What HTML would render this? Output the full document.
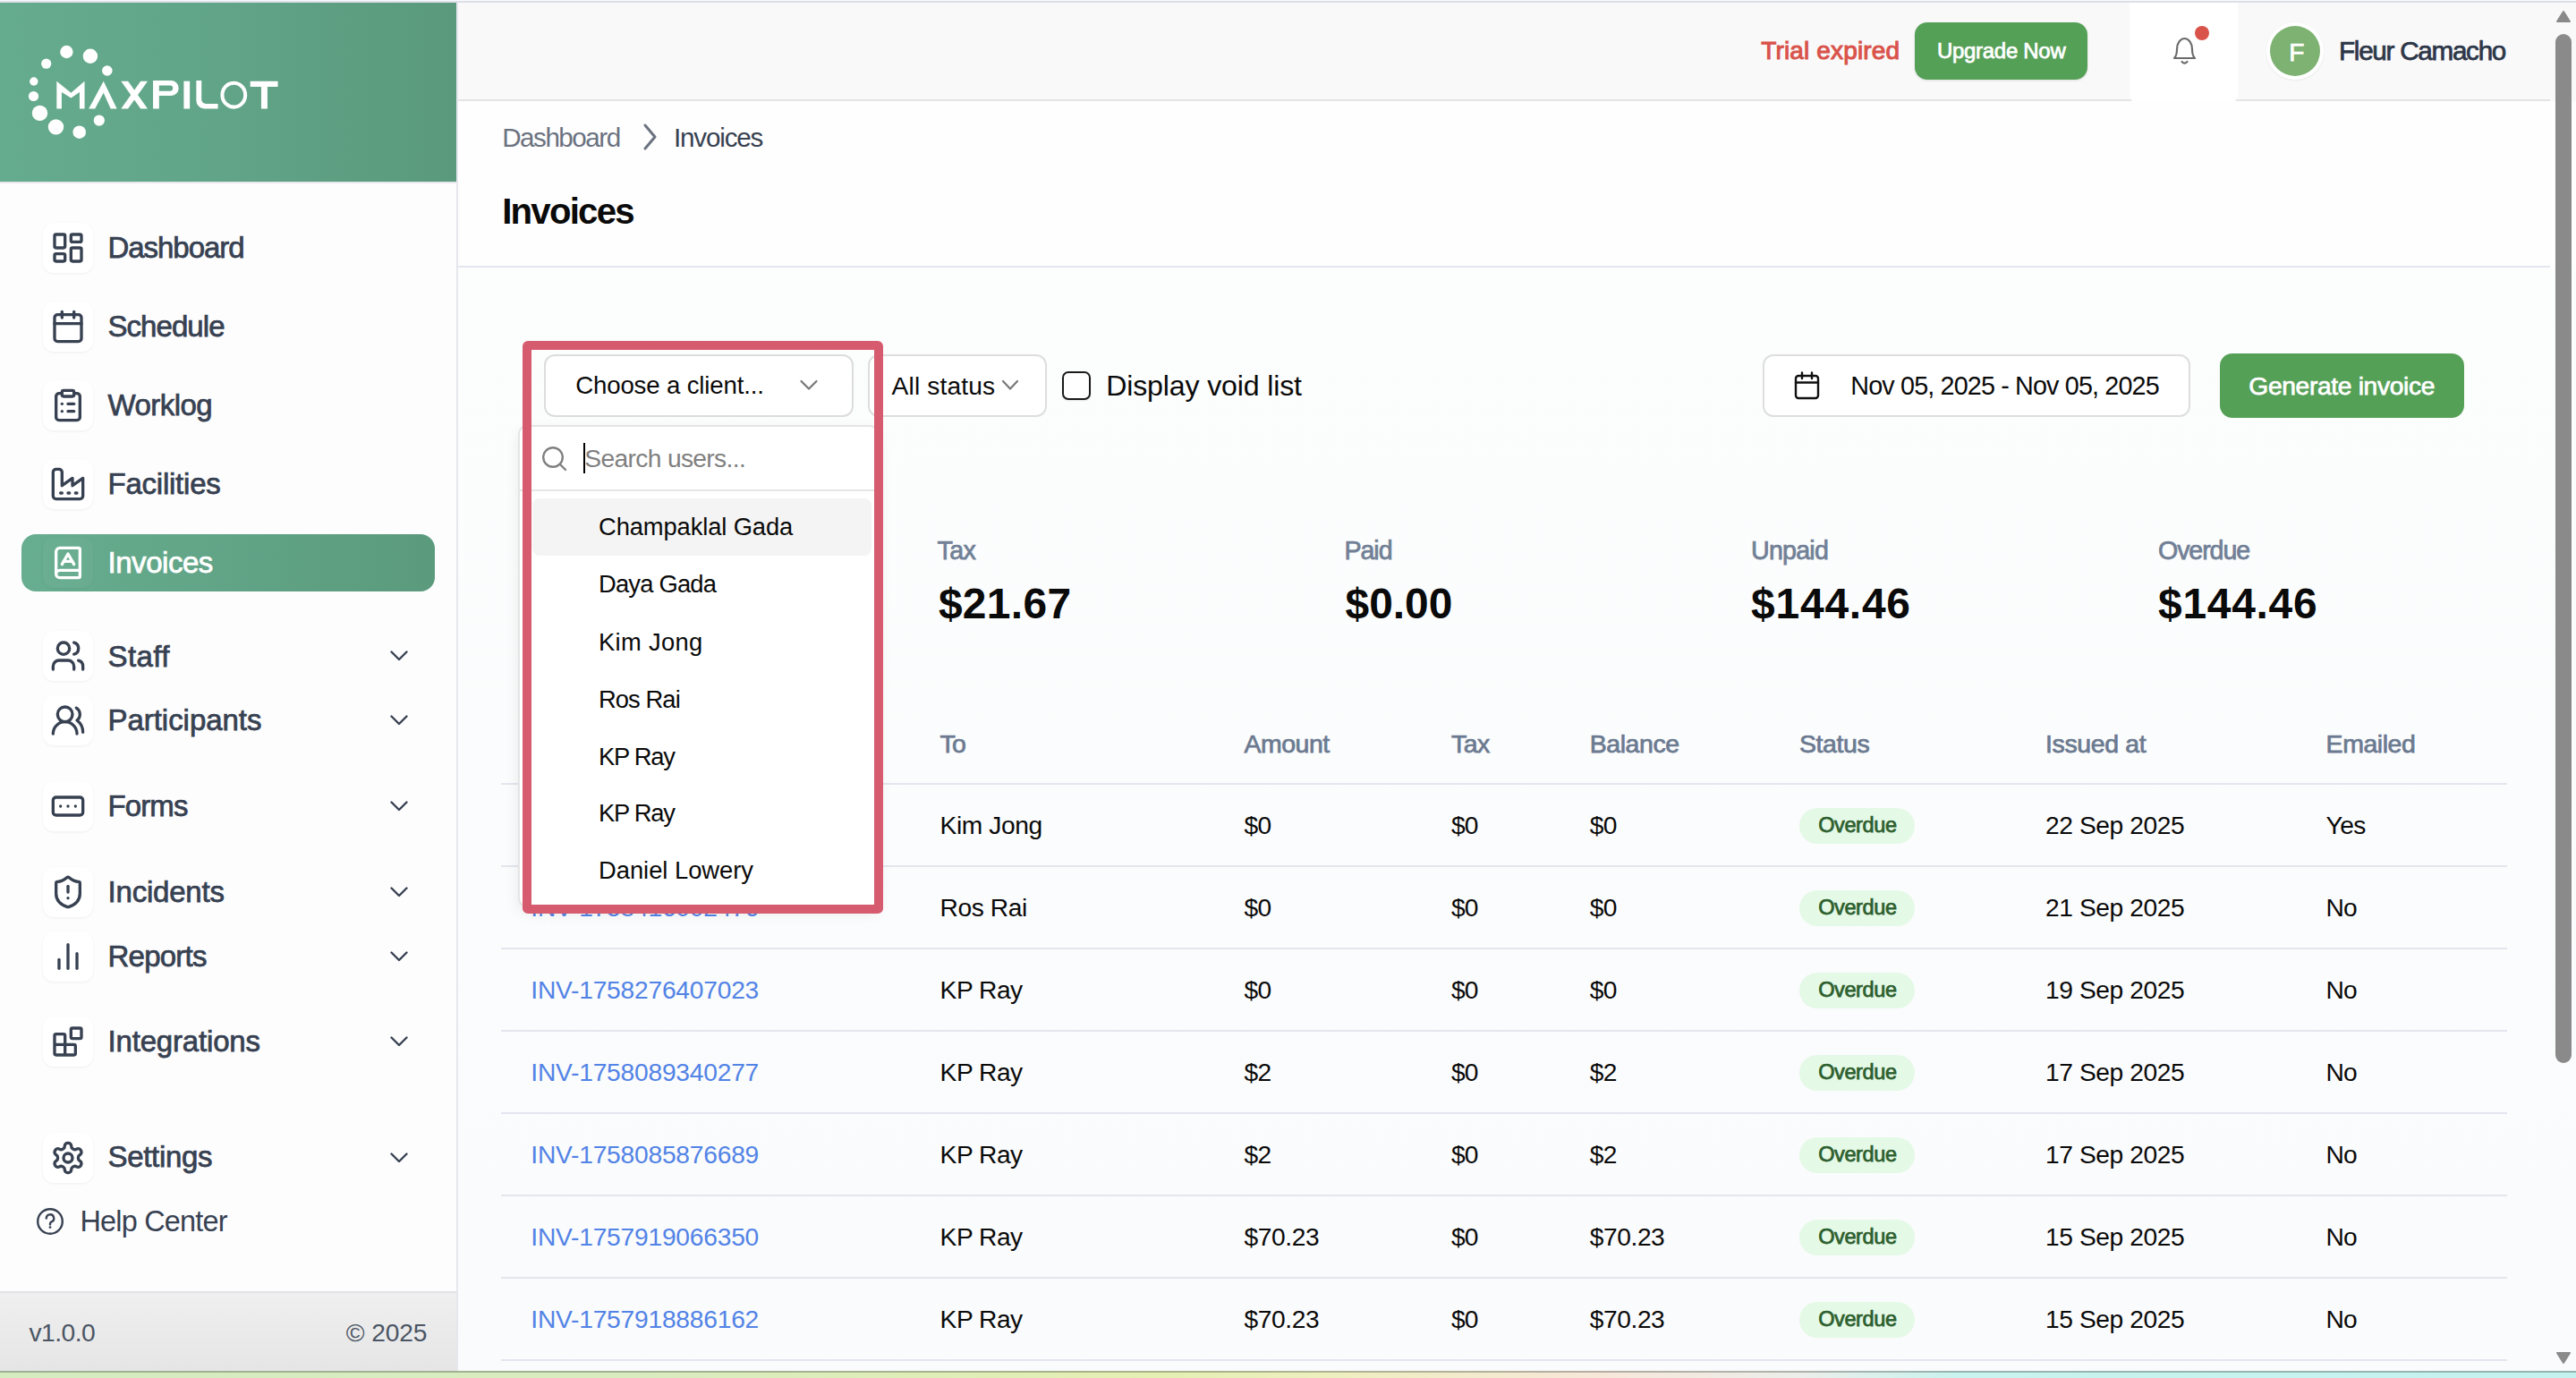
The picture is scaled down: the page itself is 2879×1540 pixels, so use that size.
<!DOCTYPE html>
<html><head><meta charset="utf-8"><style>
html,body{margin:0;padding:0;width:2879px;height:1540px;overflow:hidden;background:#fbfcfd;font-family:"Liberation Sans",sans-serif;}
.b{position:absolute;}
.t{position:absolute;white-space:nowrap;}
</style></head><body>
<div class="b" style="left:0px;top:0px;width:2879px;height:1px;background:#f9fafc"></div>
<div class="b" style="left:0px;top:1px;width:2879px;height:2px;background:#dcdfe7"></div>
<div class="b" style="left:0px;top:3px;width:510px;height:1530px;background:#fdfdfe"></div>
<div class="b" style="left:510px;top:3px;width:2px;height:1530px;background:#e6e7ec"></div>
<div class="b" style="left:0px;top:3px;width:510px;height:200px;background:linear-gradient(90deg,#65ab8d 0%,#62a68a 40%,#5a997c 100%)"></div>
<div class="b" style="left:0px;top:203px;width:510px;height:2px;background:#e8e7ed"></div>
<svg class="b" style="left:0;top:0" width="510" height="210" viewBox="0 0 510 210"><circle cx="74.4" cy="58.0" r="7.2" fill="#fff"/><circle cx="100.9" cy="62.7" r="8.2" fill="#fff"/><circle cx="51.7" cy="71.2" r="5.6" fill="#fff"/><circle cx="119.8" cy="79.0" r="5.8" fill="#fff"/><circle cx="37.8" cy="91.0" r="4.7" fill="#fff"/><circle cx="37.5" cy="107.5" r="5.6" fill="#fff"/><circle cx="44.5" cy="126.4" r="8.7" fill="#fff"/><circle cx="62.5" cy="141.9" r="8.7" fill="#fff"/><circle cx="88.7" cy="147.7" r="7.3" fill="#fff"/><circle cx="110.8" cy="134.6" r="6.1" fill="#fff"/><g transform="translate(20,40) scale(0.11646)" fill="#fff"><polygon points="372,700 372,435 510,548 640,435 640,700 592,700 592,540 510,597 420,540 420,700"/><polygon points="680,700 822,435 950,700 890,700 822,548 740,700"/><polygon points="990,435 1057,435 1245,700 1178,700"/><polygon points="1178,435 1245,435 1057,700 990,700"/><path fill-rule="evenodd" d="M1297,700 V430 H1470 A73,73 0 0 1 1470,576 H1355 V700 Z M1355,476 H1460 A27,27 0 0 1 1460,530 H1355 Z"/><rect x="1592" y="435" width="58" height="265"/><path d="M1712,430 H1762 V610 A42,42 0 0 0 1804,652 H1920 V700 H1790 A78,78 0 0 1 1712,622 Z"/><path fill-rule="evenodd" d="M2072,435 A128,133 0 1 1 2072,701 A128,133 0 1 1 2072,435 Z M2072,470 A93,98 0 1 0 2072,666 A93,98 0 1 0 2072,470 Z"/><polygon points="2230,435 2495,435 2495,490 2395,490 2395,700 2335,700 2335,490 2230,490"/></g></svg>
<div class="b" style="left:48px;top:249px;width:56px;height:56px;background:#fff;border-radius:12px;box-shadow:0 1px 3px rgba(0,0,0,0.06)"></div>
<svg class="b" style="left:56.0px;top:257.0px" width="40" height="40" viewBox="0 0 24 24" fill="none" stroke="#374151" stroke-width="2" stroke-linecap="round" stroke-linejoin="round"><rect width="7" height="9" x="3" y="3" rx="1"/><rect width="7" height="5" x="14" y="3" rx="1"/><rect width="7" height="9" x="14" y="12" rx="1"/><rect width="7" height="5" x="3" y="16" rx="1"/></svg>
<div class="t" style="left:120.50px;top:260.07px;font-size:32.99px;line-height:32.99px;color:#374151;font-weight:400;letter-spacing:-1.041px;-webkit-text-stroke:0.75px #374151;">Dashboard</div>
<div class="b" style="left:48px;top:336.5px;width:56px;height:56.0px;background:#fff;border-radius:12px;box-shadow:0 1px 3px rgba(0,0,0,0.06)"></div>
<svg class="b" style="left:56.0px;top:344.5px" width="40" height="40" viewBox="0 0 24 24" fill="none" stroke="#374151" stroke-width="2" stroke-linecap="round" stroke-linejoin="round"><path d="M8 2v4"/><path d="M16 2v4"/><rect width="18" height="18" x="3" y="4" rx="2"/><path d="M3 10h18"/></svg>
<div class="t" style="left:120.50px;top:348.07px;font-size:32.99px;line-height:32.99px;color:#374151;font-weight:400;letter-spacing:-0.939px;-webkit-text-stroke:0.75px #374151;">Schedule</div>
<div class="b" style="left:48px;top:424.5px;width:56px;height:56.0px;background:#fff;border-radius:12px;box-shadow:0 1px 3px rgba(0,0,0,0.06)"></div>
<svg class="b" style="left:56.0px;top:432.5px" width="40" height="40" viewBox="0 0 24 24" fill="none" stroke="#374151" stroke-width="2" stroke-linecap="round" stroke-linejoin="round"><rect width="8" height="4" x="8" y="2" rx="1" ry="1"/><path d="M16 4h2a2 2 0 0 1 2 2v14a2 2 0 0 1-2 2H6a2 2 0 0 1-2-2V6a2 2 0 0 1 2-2h2"/><path d="M12 11h4"/><path d="M12 16h4"/><path d="M8 11h.01"/><path d="M8 16h.01"/></svg>
<div class="t" style="left:120.50px;top:436.07px;font-size:32.99px;line-height:32.99px;color:#374151;font-weight:400;letter-spacing:-0.536px;-webkit-text-stroke:0.75px #374151;">Worklog</div>
<div class="b" style="left:48px;top:512.5px;width:56px;height:56.0px;background:#fff;border-radius:12px;box-shadow:0 1px 3px rgba(0,0,0,0.06)"></div>
<svg class="b" style="left:56.0px;top:520.5px" width="40" height="40" viewBox="0 0 24 24" fill="none" stroke="#374151" stroke-width="2" stroke-linecap="round" stroke-linejoin="round"><path d="M2 20a2 2 0 0 0 2 2h16a2 2 0 0 0 2-2V8l-7 5V8l-7 5V4a2 2 0 0 0-2-2H4a2 2 0 0 0-2 2Z"/><path d="M17 18h1"/><path d="M12 18h1"/><path d="M7 18h1"/></svg>
<div class="t" style="left:120.50px;top:524.07px;font-size:32.99px;line-height:32.99px;color:#374151;font-weight:400;letter-spacing:-0.226px;-webkit-text-stroke:0.75px #374151;">Facilities</div>
<div class="b" style="left:24px;top:597px;width:462px;height:64px;background:linear-gradient(90deg,#67ad8f,#5b9a7d);border-radius:16px"></div>
<div class="b" style="left:48px;top:601px;width:56px;height:56px;background:rgba(255,255,255,0.03);border-radius:12px;box-shadow:0 1px 3px rgba(0,0,0,0.04)"></div>
<svg class="b" style="left:56.0px;top:609.0px" width="40" height="40" viewBox="0 0 24 24" fill="none" stroke="#fff" stroke-width="2" stroke-linecap="round" stroke-linejoin="round"><path d="M4 19.5v-15A2.5 2.5 0 0 1 6.5 2H19a1 1 0 0 1 1 1v18a1 1 0 0 1-1 1H6.5a1 1 0 0 1 0-5H20"/><path d="m8 13 4-7 4 7"/><path d="M9.1 11h5.8"/></svg>
<div class="t" style="left:120.50px;top:612.07px;font-size:32.99px;line-height:32.99px;color:#fff;font-weight:400;letter-spacing:-0.454px;-webkit-text-stroke:0.75px #fff;">Invoices</div>
<div class="b" style="left:48px;top:705px;width:56px;height:56px;background:#fff;border-radius:12px;box-shadow:0 1px 3px rgba(0,0,0,0.06)"></div>
<svg class="b" style="left:56.0px;top:713.0px" width="40" height="40" viewBox="0 0 24 24" fill="none" stroke="#374151" stroke-width="2" stroke-linecap="round" stroke-linejoin="round"><path d="M16 21v-2a4 4 0 0 0-4-4H6a4 4 0 0 0-4 4v2"/><circle cx="9" cy="7" r="4"/><path d="M22 21v-2a4 4 0 0 0-3-3.87"/><path d="M16 3.13a4 4 0 0 1 0 7.75"/></svg>
<div class="t" style="left:120.50px;top:716.67px;font-size:32.99px;line-height:32.99px;color:#374151;font-weight:400;letter-spacing:0.399px;-webkit-text-stroke:0.75px #374151;">Staff</div>
<svg class="b" style="left:436px;top:727px" width="20" height="12" viewBox="0 0 20 12"><path d="M1.5 1.5 L10 10 L18.5 1.5" fill="none" stroke="#374151" stroke-width="2.4" stroke-linecap="round" stroke-linejoin="round"/></svg>
<div class="b" style="left:48px;top:776.5px;width:56px;height:56.0px;background:#fff;border-radius:12px;box-shadow:0 1px 3px rgba(0,0,0,0.06)"></div>
<svg class="b" style="left:56.0px;top:784.5px" width="40" height="40" viewBox="0 0 24 24" fill="none" stroke="#374151" stroke-width="2" stroke-linecap="round" stroke-linejoin="round"><path d="M18 21a8 8 0 0 0-16 0"/><circle cx="10" cy="8" r="5"/><path d="M22 20c0-3.37-2-6.5-4-8a5 5 0 0 0-.45-8.3"/></svg>
<div class="t" style="left:120.50px;top:788.07px;font-size:32.99px;line-height:32.99px;color:#374151;font-weight:400;letter-spacing:-0.034px;-webkit-text-stroke:0.75px #374151;">Participants</div>
<svg class="b" style="left:436px;top:798.5px" width="20" height="12" viewBox="0 0 20 12"><path d="M1.5 1.5 L10 10 L18.5 1.5" fill="none" stroke="#374151" stroke-width="2.4" stroke-linecap="round" stroke-linejoin="round"/></svg>
<div class="b" style="left:48px;top:873px;width:56px;height:56px;background:#fff;border-radius:12px;box-shadow:0 1px 3px rgba(0,0,0,0.06)"></div>
<svg class="b" style="left:56.0px;top:881.0px" width="40" height="40" viewBox="0 0 24 24" fill="none" stroke="#374151" stroke-width="2" stroke-linecap="round" stroke-linejoin="round"><rect width="20" height="12" x="2" y="6" rx="2"/><path d="M12 12h.01"/><path d="M17 12h.01"/><path d="M7 12h.01"/></svg>
<div class="t" style="left:120.50px;top:883.57px;font-size:32.99px;line-height:32.99px;color:#374151;font-weight:400;letter-spacing:-0.883px;-webkit-text-stroke:0.75px #374151;">Forms</div>
<svg class="b" style="left:436px;top:895px" width="20" height="12" viewBox="0 0 20 12"><path d="M1.5 1.5 L10 10 L18.5 1.5" fill="none" stroke="#374151" stroke-width="2.4" stroke-linecap="round" stroke-linejoin="round"/></svg>
<div class="b" style="left:48px;top:968.6px;width:56px;height:55.999999999999886px;background:#fff;border-radius:12px;box-shadow:0 1px 3px rgba(0,0,0,0.06)"></div>
<svg class="b" style="left:56.0px;top:976.6px" width="40" height="40" viewBox="0 0 24 24" fill="none" stroke="#374151" stroke-width="2" stroke-linecap="round" stroke-linejoin="round"><path d="M20 13c0 5-3.5 7.5-7.66 8.95a1 1 0 0 1-.67-.01C7.5 20.5 4 18 4 13V6a1 1 0 0 1 1-1c2 0 4.5-1.2 6.24-2.72a1.17 1.17 0 0 1 1.520 0C14.51 3.81 17 5 19 5a1 1 0 0 1 1 1z"/><path d="M12 8v4"/><path d="M12 16h.01"/></svg>
<div class="t" style="left:120.50px;top:979.77px;font-size:32.99px;line-height:32.99px;color:#374151;font-weight:400;letter-spacing:-0.191px;-webkit-text-stroke:0.75px #374151;">Incidents</div>
<svg class="b" style="left:436px;top:990.6px" width="20" height="12" viewBox="0 0 20 12"><path d="M1.5 1.5 L10 10 L18.5 1.5" fill="none" stroke="#374151" stroke-width="2.4" stroke-linecap="round" stroke-linejoin="round"/></svg>
<div class="b" style="left:48px;top:1040.8px;width:56px;height:56.0px;background:#fff;border-radius:12px;box-shadow:0 1px 3px rgba(0,0,0,0.06)"></div>
<svg class="b" style="left:56.0px;top:1048.8px" width="40" height="40" viewBox="0 0 24 24" fill="none" stroke="#374151" stroke-width="2" stroke-linecap="round" stroke-linejoin="round"><path d="M18 20V10"/><path d="M12 20V4"/><path d="M6 20v-6"/></svg>
<div class="t" style="left:120.50px;top:1052.07px;font-size:32.99px;line-height:32.99px;color:#374151;font-weight:400;letter-spacing:-0.745px;-webkit-text-stroke:0.75px #374151;">Reports</div>
<svg class="b" style="left:436px;top:1062.8px" width="20" height="12" viewBox="0 0 20 12"><path d="M1.5 1.5 L10 10 L18.5 1.5" fill="none" stroke="#374151" stroke-width="2.4" stroke-linecap="round" stroke-linejoin="round"/></svg>
<div class="b" style="left:48px;top:1136px;width:56px;height:56px;background:#fff;border-radius:12px;box-shadow:0 1px 3px rgba(0,0,0,0.06)"></div>
<svg class="b" style="left:56.0px;top:1144.0px" width="40" height="40" viewBox="0 0 24 24" fill="none" stroke="#374151" stroke-width="2" stroke-linecap="round" stroke-linejoin="round"><rect width="7" height="7" x="14" y="3" rx="1"/><path d="M10 21V8a1 1 0 0 0-1-1H4a1 1 0 0 0-1 1v12a1 1 0 0 0 1 1h12a1 1 0 0 0 1-1v-5a1 1 0 0 0-1-1H3"/></svg>
<div class="t" style="left:120.50px;top:1147.07px;font-size:32.99px;line-height:32.99px;color:#374151;font-weight:400;letter-spacing:-0.171px;-webkit-text-stroke:0.75px #374151;">Integrations</div>
<svg class="b" style="left:436px;top:1158px" width="20" height="12" viewBox="0 0 20 12"><path d="M1.5 1.5 L10 10 L18.5 1.5" fill="none" stroke="#374151" stroke-width="2.4" stroke-linecap="round" stroke-linejoin="round"/></svg>
<div class="b" style="left:48px;top:1265.8px;width:56px;height:56.0px;background:#fff;border-radius:12px;box-shadow:0 1px 3px rgba(0,0,0,0.06)"></div>
<svg class="b" style="left:56.0px;top:1273.8px" width="40" height="40" viewBox="0 0 24 24" fill="none" stroke="#374151" stroke-width="2" stroke-linecap="round" stroke-linejoin="round"><path d="M12.22 2h-.44a2 2 0 0 0-2 2v.18a2 2 0 0 1-1 1.73l-.43.25a2 2 0 0 1-2 0l-.15-.08a2 2 0 0 0-2.730.73l-.22.38a2 2 0 0 0 .73 2.73l.15.1a2 2 0 0 1 1 1.72v.51a2 2 0 0 1-1 1.74l-.15.09a2 2 0 0 0-.73 2.73l.22.38a2 2 0 0 0 2.73.73l.15-.08a2 2 0 0 1 2 0l.43.25a2 2 0 0 1 1 1.73V20a2 2 0 0 0 2 2h.44a2 2 0 0 0 2-2v-.18a2 2 0 0 1 1-1.73l.43-.25a2 2 0 0 1 2 0l.15.08a2 2 0 0 0 2.73-.73l.22-.39a2 2 0 0 0-.73-2.73l-.15-.08a2 2 0 0 1-1-1.74v-.5a2 2 0 0 1 1-1.74l.15-.09a2 2 0 0 0 .73-2.73l-.22-.38a2 2 0 0 0-2.73-.73l-.15.08a2 2 0 0 1-2 0l-.43-.25a2 2 0 0 1-1-1.73V4a2 2 0 0 0-2-2z"/><circle cx="12" cy="12" r="3"/></svg>
<div class="t" style="left:120.50px;top:1276.07px;font-size:32.99px;line-height:32.99px;color:#374151;font-weight:400;letter-spacing:-0.323px;-webkit-text-stroke:0.75px #374151;">Settings</div>
<svg class="b" style="left:436px;top:1287.8px" width="20" height="12" viewBox="0 0 20 12"><path d="M1.5 1.5 L10 10 L18.5 1.5" fill="none" stroke="#374151" stroke-width="2.4" stroke-linecap="round" stroke-linejoin="round"/></svg>
<svg class="b" style="left:40px;top:1349px" width="32" height="32" viewBox="0 0 32 32"><circle cx="16" cy="16" r="13.8" fill="none" stroke="#374151" stroke-width="2.4"/><path d="M11.8 12.5 a4.2 4.2 0 1 1 5.8 3.9 c-1 .5 -1.6 1.2 -1.6 2.4 v0.6" fill="none" stroke="#374151" stroke-width="2.4" stroke-linecap="round"/><circle cx="16" cy="22.6" r="1.4" fill="#374151"/></svg>
<div class="t" style="left:89.40px;top:1349.14px;font-size:32.43px;line-height:32.43px;color:#374151;font-weight:400;letter-spacing:-0.780px;">Help Center</div>
<div class="b" style="left:0px;top:1443px;width:510px;height:90px;background:linear-gradient(180deg,#efeff0,#e5e5e6);border-top:2px solid #e2e2e4"></div>
<div class="t" style="left:32.50px;top:1475.13px;font-size:28.20px;line-height:28.20px;color:#4b5563;font-weight:400;letter-spacing:-0.508px;">v1.0.0</div>
<div class="t" style="left:386.80px;top:1475.13px;font-size:28.20px;line-height:28.20px;color:#4b5563;font-weight:400;letter-spacing:-0.112px;">© 2025</div>
<div class="b" style="left:512px;top:3px;width:2338px;height:108px;background:#f9f9fa"></div>
<div class="b" style="left:512px;top:111px;width:2338px;height:2px;background:#e4e4e6"></div>
<div class="b" style="left:2380px;top:3px;width:121px;height:113px;background:#fff;border-radius:0 0 10px 10px"></div>
<div class="t" style="left:1968.30px;top:42.84px;font-size:28.06px;line-height:28.06px;color:#d9534a;font-weight:400;letter-spacing:0.123px;-webkit-text-stroke:1.0px #d9534a;">Trial expired</div>
<div class="b" style="left:2140px;top:25px;width:193px;height:64px;background:#55a057;border-radius:14px;box-shadow:0 1px 3px rgba(0,0,0,0.12)"></div>
<div class="t" style="left:2165.00px;top:44.71px;font-size:23.97px;line-height:23.97px;color:#fff;font-weight:400;letter-spacing:-0.286px;-webkit-text-stroke:0.75px #fff;">Upgrade Now</div>
<svg class="b" style="left:2424px;top:38px" width="36" height="38" viewBox="0 0 36 38"><path d="M6 27 C8 25 9 22 9 17 C9 10 13 5 17.5 5 C22 5 26 10 26 17 C26 22 27 25 29 27 Z" fill="none" stroke="#6b6b6b" stroke-width="2.2" stroke-linejoin="round"/><path d="M14.5 31 Q17.5 34 20.5 31" fill="none" stroke="#6b6b6b" stroke-width="2.2" stroke-linecap="round"/></svg>
<div class="b" style="left:2453px;top:29px;width:16px;height:16px;border-radius:50%;background:#d9534a"></div>
<div class="b" style="left:2533px;top:25px;width:64px;height:64px;border-radius:50%;background:#fff;box-shadow:0 1px 3px rgba(0,0,0,0.06)"></div>
<div class="b" style="left:2537px;top:29px;width:56px;height:56px;border-radius:50%;background:#7db272"></div>
<div class="t" style="left:2558.20px;top:43.53px;font-size:28.20px;line-height:28.20px;color:#fff;font-weight:400;letter-spacing:0.000px;-webkit-text-stroke:0.75px #fff;">F</div>
<div class="t" style="left:2614.00px;top:42.33px;font-size:29.61px;line-height:29.61px;color:#2d3748;font-weight:400;letter-spacing:-1.256px;-webkit-text-stroke:0.75px #2d3748;">Fleur Camacho</div>
<div class="b" style="left:512px;top:113px;width:2338px;height:184px;background:#fefefe"></div>
<div class="t" style="left:561.20px;top:138.63px;font-size:29.61px;line-height:29.61px;color:#6b7280;font-weight:400;letter-spacing:-1.485px;">Dashboard</div>
<svg class="b" style="left:714px;top:136px" width="26" height="34" viewBox="0 0 26 34"><path d="M7 4 L18 17 L7 30" fill="none" stroke="#6b7280" stroke-width="3" stroke-linecap="round" stroke-linejoin="round"/></svg>
<div class="t" style="left:753.00px;top:138.63px;font-size:29.61px;line-height:29.61px;color:#374151;font-weight:400;letter-spacing:-1.180px;">Invoices</div>
<div class="t" style="left:561.20px;top:217.18px;font-size:40.18px;line-height:40.18px;color:#0a0a0a;font-weight:700;letter-spacing:-1.761px;">Invoices</div>
<div class="b" style="left:512px;top:297px;width:2338px;height:2px;background:#e2e6ee"></div>
<div class="b" style="left:512px;top:299px;width:2367px;height:1234px;background:linear-gradient(180deg,#fcfdfd,#fafbfc)"></div>
<div class="b" style="left:1970px;top:396px;width:478px;height:70px;background:#fff;border:2px solid #dedede;border-radius:12px;box-sizing:border-box"></div>
<svg class="b" style="left:2004px;top:414px" width="32" height="34" viewBox="0 0 32 34"><rect x="3" y="6" width="25" height="25" rx="3" fill="none" stroke="#111" stroke-width="2.4"/><path d="M3 13.5 H28 M10 2.5 V9 M21 2.5 V9" fill="none" stroke="#111" stroke-width="2.4" stroke-linecap="round"/></svg>
<div class="t" style="left:2068.30px;top:416.95px;font-size:28.76px;line-height:28.76px;color:#0a0a0a;font-weight:400;letter-spacing:-0.855px;">Nov 05, 2025 - Nov 05, 2025</div>
<div class="b" style="left:2481px;top:395px;width:273px;height:72px;background:#55a057;border-radius:14px"></div>
<div class="t" style="left:2513.30px;top:417.23px;font-size:28.20px;line-height:28.20px;color:#fff;font-weight:400;letter-spacing:-0.332px;-webkit-text-stroke:0.75px #fff;">Generate invoice</div>
<div class="b" style="left:970px;top:396px;width:200px;height:70px;background:#fff;border:2px solid #dedede;border-radius:12px;box-sizing:border-box"></div>
<div class="t" style="left:996.60px;top:417.13px;font-size:28.20px;line-height:28.20px;color:#0a0a0a;font-weight:400;letter-spacing:0.118px;">All status</div>
<svg class="b" style="left:1118px;top:423px" width="22" height="16" viewBox="0 0 22 16"><path d="M3 3 L11 11.5 L19 3" fill="none" stroke="#777" stroke-width="2.2" stroke-linecap="round" stroke-linejoin="round"/></svg>
<div class="b" style="left:1187px;top:415px;width:32px;height:32px;background:#fff;border:2.4px solid #1a1a1a;border-radius:7px;box-sizing:border-box;box-shadow:0 1px 2px rgba(0,0,0,0.1)"></div>
<div class="t" style="left:1236.20px;top:415.18px;font-size:32.15px;line-height:32.15px;color:#0a0a0a;font-weight:400;letter-spacing:-0.168px;">Display void list</div>
<div class="t" style="left:1047.50px;top:601.17px;font-size:28.62px;line-height:28.62px;color:#718096;font-weight:400;letter-spacing:-0.603px;-webkit-text-stroke:0.75px #718096;">Tax</div>
<div class="t" style="left:1048.90px;top:651.41px;font-size:47.94px;line-height:47.94px;color:#0a0a0a;font-weight:700;letter-spacing:0.323px;">$21.67</div>
<div class="t" style="left:1502.40px;top:601.17px;font-size:28.62px;line-height:28.62px;color:#718096;font-weight:400;letter-spacing:-1.014px;-webkit-text-stroke:0.75px #718096;">Paid</div>
<div class="t" style="left:1503.50px;top:651.41px;font-size:47.94px;line-height:47.94px;color:#0a0a0a;font-weight:700;letter-spacing:-0.020px;">$0.00</div>
<div class="t" style="left:1957.10px;top:601.17px;font-size:28.62px;line-height:28.62px;color:#718096;font-weight:400;letter-spacing:-0.785px;-webkit-text-stroke:0.75px #718096;">Unpaid</div>
<div class="t" style="left:1957.10px;top:651.41px;font-size:47.94px;line-height:47.94px;color:#0a0a0a;font-weight:700;letter-spacing:0.769px;">$144.46</div>
<div class="t" style="left:2412.00px;top:601.17px;font-size:28.62px;line-height:28.62px;color:#718096;font-weight:400;letter-spacing:-1.093px;-webkit-text-stroke:0.75px #718096;">Overdue</div>
<div class="t" style="left:2412.00px;top:651.41px;font-size:47.94px;line-height:47.94px;color:#0a0a0a;font-weight:700;letter-spacing:0.719px;">$144.46</div>
<div class="t" style="left:1050.60px;top:816.99px;font-size:28.48px;line-height:28.48px;color:#6b7a90;font-weight:400;letter-spacing:-0.774px;-webkit-text-stroke:0.75px #6b7a90;">To</div>
<div class="t" style="left:1390.60px;top:816.99px;font-size:28.48px;line-height:28.48px;color:#6b7a90;font-weight:400;letter-spacing:-0.506px;-webkit-text-stroke:0.75px #6b7a90;">Amount</div>
<div class="t" style="left:1622.00px;top:816.99px;font-size:28.48px;line-height:28.48px;color:#6b7a90;font-weight:400;letter-spacing:-0.571px;-webkit-text-stroke:0.75px #6b7a90;">Tax</div>
<div class="t" style="left:1776.80px;top:816.99px;font-size:28.48px;line-height:28.48px;color:#6b7a90;font-weight:400;letter-spacing:-0.442px;-webkit-text-stroke:0.75px #6b7a90;">Balance</div>
<div class="t" style="left:2011.00px;top:816.99px;font-size:28.48px;line-height:28.48px;color:#6b7a90;font-weight:400;letter-spacing:-0.416px;-webkit-text-stroke:0.75px #6b7a90;">Status</div>
<div class="t" style="left:2286.00px;top:816.99px;font-size:28.48px;line-height:28.48px;color:#6b7a90;font-weight:400;letter-spacing:-0.373px;-webkit-text-stroke:0.75px #6b7a90;">Issued at</div>
<div class="t" style="left:2599.60px;top:816.99px;font-size:28.48px;line-height:28.48px;color:#6b7a90;font-weight:400;letter-spacing:-0.442px;-webkit-text-stroke:0.75px #6b7a90;">Emailed</div>
<div class="b" style="left:560px;top:875px;width:2242px;height:2px;background:#e3e6ee"></div>
<div class="b" style="left:560px;top:967px;width:2242px;height:2px;background:#e3e6ee"></div>
<div class="b" style="left:560px;top:1059px;width:2242px;height:2px;background:#e3e6ee"></div>
<div class="b" style="left:560px;top:1151px;width:2242px;height:2px;background:#e3e6ee"></div>
<div class="b" style="left:560px;top:1243px;width:2242px;height:2px;background:#e3e6ee"></div>
<div class="b" style="left:560px;top:1335px;width:2242px;height:2px;background:#e3e6ee"></div>
<div class="b" style="left:560px;top:1427px;width:2242px;height:2px;background:#e3e6ee"></div>
<div class="b" style="left:560px;top:1519px;width:2242px;height:2px;background:#e3e6ee"></div>
<div class="t" style="left:593.30px;top:908.13px;font-size:28.20px;line-height:28.20px;color:#5283e6;font-weight:400;letter-spacing:-0.226px;">INV-1758456624676</div>
<div class="t" style="left:1050.60px;top:908.13px;font-size:28.20px;line-height:28.20px;color:#0a0a0a;font-weight:400;letter-spacing:-0.433px;">Kim Jong</div>
<div class="t" style="left:1390.60px;top:908.13px;font-size:28.20px;line-height:28.20px;color:#0a0a0a;font-weight:400;letter-spacing:-0.807px;">$0</div>
<div class="t" style="left:1622.00px;top:908.13px;font-size:28.20px;line-height:28.20px;color:#0a0a0a;font-weight:400;letter-spacing:-0.807px;">$0</div>
<div class="t" style="left:1776.80px;top:908.13px;font-size:28.20px;line-height:28.20px;color:#0a0a0a;font-weight:400;letter-spacing:-0.807px;">$0</div>
<div class="b" style="left:2011px;top:903px;width:129px;height:40px;background:#e5f9e7;border-radius:20px"></div>
<div class="t" style="left:2032.20px;top:910.86px;font-size:23.55px;line-height:23.55px;color:#2d5f2e;font-weight:400;letter-spacing:-0.416px;-webkit-text-stroke:0.75px #2d5f2e;">Overdue</div>
<div class="t" style="left:2286.00px;top:908.13px;font-size:28.20px;line-height:28.20px;color:#0a0a0a;font-weight:400;letter-spacing:-0.412px;">22 Sep 2025</div>
<div class="t" style="left:2599.60px;top:908.13px;font-size:28.20px;line-height:28.20px;color:#0a0a0a;font-weight:400;letter-spacing:-0.592px;">Yes</div>
<div class="t" style="left:593.30px;top:1000.13px;font-size:28.20px;line-height:28.20px;color:#5283e6;font-weight:400;letter-spacing:-0.226px;">INV-1758416002476</div>
<div class="t" style="left:1050.60px;top:1000.13px;font-size:28.20px;line-height:28.20px;color:#0a0a0a;font-weight:400;letter-spacing:-0.431px;">Ros Rai</div>
<div class="t" style="left:1390.60px;top:1000.13px;font-size:28.20px;line-height:28.20px;color:#0a0a0a;font-weight:400;letter-spacing:-0.807px;">$0</div>
<div class="t" style="left:1622.00px;top:1000.13px;font-size:28.20px;line-height:28.20px;color:#0a0a0a;font-weight:400;letter-spacing:-0.807px;">$0</div>
<div class="t" style="left:1776.80px;top:1000.13px;font-size:28.20px;line-height:28.20px;color:#0a0a0a;font-weight:400;letter-spacing:-0.807px;">$0</div>
<div class="b" style="left:2011px;top:995px;width:129px;height:40px;background:#e5f9e7;border-radius:20px"></div>
<div class="t" style="left:2032.20px;top:1002.86px;font-size:23.55px;line-height:23.55px;color:#2d5f2e;font-weight:400;letter-spacing:-0.416px;-webkit-text-stroke:0.75px #2d5f2e;">Overdue</div>
<div class="t" style="left:2286.00px;top:1000.13px;font-size:28.20px;line-height:28.20px;color:#0a0a0a;font-weight:400;letter-spacing:-0.412px;">21 Sep 2025</div>
<div class="t" style="left:2599.60px;top:1000.13px;font-size:28.20px;line-height:28.20px;color:#0a0a0a;font-weight:400;letter-spacing:-0.930px;">No</div>
<div class="t" style="left:593.30px;top:1092.13px;font-size:28.20px;line-height:28.20px;color:#5283e6;font-weight:400;letter-spacing:-0.226px;">INV-1758276407023</div>
<div class="t" style="left:1050.60px;top:1092.13px;font-size:28.20px;line-height:28.20px;color:#0a0a0a;font-weight:400;letter-spacing:-0.490px;">KP Ray</div>
<div class="t" style="left:1390.60px;top:1092.13px;font-size:28.20px;line-height:28.20px;color:#0a0a0a;font-weight:400;letter-spacing:-0.807px;">$0</div>
<div class="t" style="left:1622.00px;top:1092.13px;font-size:28.20px;line-height:28.20px;color:#0a0a0a;font-weight:400;letter-spacing:-0.807px;">$0</div>
<div class="t" style="left:1776.80px;top:1092.13px;font-size:28.20px;line-height:28.20px;color:#0a0a0a;font-weight:400;letter-spacing:-0.807px;">$0</div>
<div class="b" style="left:2011px;top:1087px;width:129px;height:40px;background:#e5f9e7;border-radius:20px"></div>
<div class="t" style="left:2032.20px;top:1094.86px;font-size:23.55px;line-height:23.55px;color:#2d5f2e;font-weight:400;letter-spacing:-0.416px;-webkit-text-stroke:0.75px #2d5f2e;">Overdue</div>
<div class="t" style="left:2286.00px;top:1092.13px;font-size:28.20px;line-height:28.20px;color:#0a0a0a;font-weight:400;letter-spacing:-0.412px;">19 Sep 2025</div>
<div class="t" style="left:2599.60px;top:1092.13px;font-size:28.20px;line-height:28.20px;color:#0a0a0a;font-weight:400;letter-spacing:-0.930px;">No</div>
<div class="t" style="left:593.30px;top:1184.13px;font-size:28.20px;line-height:28.20px;color:#5283e6;font-weight:400;letter-spacing:-0.226px;">INV-1758089340277</div>
<div class="t" style="left:1050.60px;top:1184.13px;font-size:28.20px;line-height:28.20px;color:#0a0a0a;font-weight:400;letter-spacing:-0.490px;">KP Ray</div>
<div class="t" style="left:1390.60px;top:1184.13px;font-size:28.20px;line-height:28.20px;color:#0a0a0a;font-weight:400;letter-spacing:-0.807px;">$2</div>
<div class="t" style="left:1622.00px;top:1184.13px;font-size:28.20px;line-height:28.20px;color:#0a0a0a;font-weight:400;letter-spacing:-0.807px;">$0</div>
<div class="t" style="left:1776.80px;top:1184.13px;font-size:28.20px;line-height:28.20px;color:#0a0a0a;font-weight:400;letter-spacing:-0.807px;">$2</div>
<div class="b" style="left:2011px;top:1179px;width:129px;height:40px;background:#e5f9e7;border-radius:20px"></div>
<div class="t" style="left:2032.20px;top:1186.86px;font-size:23.55px;line-height:23.55px;color:#2d5f2e;font-weight:400;letter-spacing:-0.416px;-webkit-text-stroke:0.75px #2d5f2e;">Overdue</div>
<div class="t" style="left:2286.00px;top:1184.13px;font-size:28.20px;line-height:28.20px;color:#0a0a0a;font-weight:400;letter-spacing:-0.412px;">17 Sep 2025</div>
<div class="t" style="left:2599.60px;top:1184.13px;font-size:28.20px;line-height:28.20px;color:#0a0a0a;font-weight:400;letter-spacing:-0.930px;">No</div>
<div class="t" style="left:593.30px;top:1276.13px;font-size:28.20px;line-height:28.20px;color:#5283e6;font-weight:400;letter-spacing:-0.226px;">INV-1758085876689</div>
<div class="t" style="left:1050.60px;top:1276.13px;font-size:28.20px;line-height:28.20px;color:#0a0a0a;font-weight:400;letter-spacing:-0.490px;">KP Ray</div>
<div class="t" style="left:1390.60px;top:1276.13px;font-size:28.20px;line-height:28.20px;color:#0a0a0a;font-weight:400;letter-spacing:-0.807px;">$2</div>
<div class="t" style="left:1622.00px;top:1276.13px;font-size:28.20px;line-height:28.20px;color:#0a0a0a;font-weight:400;letter-spacing:-0.807px;">$0</div>
<div class="t" style="left:1776.80px;top:1276.13px;font-size:28.20px;line-height:28.20px;color:#0a0a0a;font-weight:400;letter-spacing:-0.807px;">$2</div>
<div class="b" style="left:2011px;top:1271px;width:129px;height:40px;background:#e5f9e7;border-radius:20px"></div>
<div class="t" style="left:2032.20px;top:1278.86px;font-size:23.55px;line-height:23.55px;color:#2d5f2e;font-weight:400;letter-spacing:-0.416px;-webkit-text-stroke:0.75px #2d5f2e;">Overdue</div>
<div class="t" style="left:2286.00px;top:1276.13px;font-size:28.20px;line-height:28.20px;color:#0a0a0a;font-weight:400;letter-spacing:-0.412px;">17 Sep 2025</div>
<div class="t" style="left:2599.60px;top:1276.13px;font-size:28.20px;line-height:28.20px;color:#0a0a0a;font-weight:400;letter-spacing:-0.930px;">No</div>
<div class="t" style="left:593.30px;top:1368.13px;font-size:28.20px;line-height:28.20px;color:#5283e6;font-weight:400;letter-spacing:-0.226px;">INV-1757919066350</div>
<div class="t" style="left:1050.60px;top:1368.13px;font-size:28.20px;line-height:28.20px;color:#0a0a0a;font-weight:400;letter-spacing:-0.490px;">KP Ray</div>
<div class="t" style="left:1390.60px;top:1368.13px;font-size:28.20px;line-height:28.20px;color:#0a0a0a;font-weight:400;letter-spacing:-0.445px;">$70.23</div>
<div class="t" style="left:1622.00px;top:1368.13px;font-size:28.20px;line-height:28.20px;color:#0a0a0a;font-weight:400;letter-spacing:-0.807px;">$0</div>
<div class="t" style="left:1776.80px;top:1368.13px;font-size:28.20px;line-height:28.20px;color:#0a0a0a;font-weight:400;letter-spacing:-0.445px;">$70.23</div>
<div class="b" style="left:2011px;top:1363px;width:129px;height:40px;background:#e5f9e7;border-radius:20px"></div>
<div class="t" style="left:2032.20px;top:1370.86px;font-size:23.55px;line-height:23.55px;color:#2d5f2e;font-weight:400;letter-spacing:-0.416px;-webkit-text-stroke:0.75px #2d5f2e;">Overdue</div>
<div class="t" style="left:2286.00px;top:1368.13px;font-size:28.20px;line-height:28.20px;color:#0a0a0a;font-weight:400;letter-spacing:-0.412px;">15 Sep 2025</div>
<div class="t" style="left:2599.60px;top:1368.13px;font-size:28.20px;line-height:28.20px;color:#0a0a0a;font-weight:400;letter-spacing:-0.930px;">No</div>
<div class="t" style="left:593.30px;top:1460.13px;font-size:28.20px;line-height:28.20px;color:#5283e6;font-weight:400;letter-spacing:-0.226px;">INV-1757918886162</div>
<div class="t" style="left:1050.60px;top:1460.13px;font-size:28.20px;line-height:28.20px;color:#0a0a0a;font-weight:400;letter-spacing:-0.490px;">KP Ray</div>
<div class="t" style="left:1390.60px;top:1460.13px;font-size:28.20px;line-height:28.20px;color:#0a0a0a;font-weight:400;letter-spacing:-0.445px;">$70.23</div>
<div class="t" style="left:1622.00px;top:1460.13px;font-size:28.20px;line-height:28.20px;color:#0a0a0a;font-weight:400;letter-spacing:-0.807px;">$0</div>
<div class="t" style="left:1776.80px;top:1460.13px;font-size:28.20px;line-height:28.20px;color:#0a0a0a;font-weight:400;letter-spacing:-0.445px;">$70.23</div>
<div class="b" style="left:2011px;top:1455px;width:129px;height:40px;background:#e5f9e7;border-radius:20px"></div>
<div class="t" style="left:2032.20px;top:1462.86px;font-size:23.55px;line-height:23.55px;color:#2d5f2e;font-weight:400;letter-spacing:-0.416px;-webkit-text-stroke:0.75px #2d5f2e;">Overdue</div>
<div class="t" style="left:2286.00px;top:1460.13px;font-size:28.20px;line-height:28.20px;color:#0a0a0a;font-weight:400;letter-spacing:-0.412px;">15 Sep 2025</div>
<div class="t" style="left:2599.60px;top:1460.13px;font-size:28.20px;line-height:28.20px;color:#0a0a0a;font-weight:400;letter-spacing:-0.930px;">No</div>
<div class="b" style="left:608px;top:396px;width:346px;height:70px;background:#fff;border:2px solid #dcdcdc;border-radius:12px;box-sizing:border-box"></div>
<div class="t" style="left:643.20px;top:417.00px;font-size:27.63px;line-height:27.63px;color:#0a0a0a;font-weight:400;letter-spacing:-0.163px;">Choose a client...</div>
<svg class="b" style="left:892px;top:423px" width="24" height="16" viewBox="0 0 24 16"><path d="M3.5 3 L12 11.5 L20.5 3" fill="none" stroke="#777" stroke-width="2.2" stroke-linecap="round" stroke-linejoin="round"/></svg>
<div class="b" style="left:579px;top:475px;width:403px;height:539px;background:#fff;border:2px solid #e5e5e5;border-radius:10px;box-sizing:border-box;box-shadow:0 6px 16px rgba(0,0,0,0.08)"></div>
<svg class="b" style="left:600px;top:493px" width="40" height="40" viewBox="0 0 40 40"><circle cx="18" cy="18" r="10.8" fill="none" stroke="#808080" stroke-width="2.4"/><path d="M26 26 L32 32" stroke="#808080" stroke-width="2.4" stroke-linecap="round"/></svg>
<div class="b" style="left:652px;top:495px;width:2px;height:34px;background:#000"></div>
<div class="t" style="left:653.30px;top:497.73px;font-size:28.20px;line-height:28.20px;color:#808080;font-weight:400;letter-spacing:-0.652px;">Search users...</div>
<div class="b" style="left:579px;top:547px;width:399px;height:2px;background:#e5e5e5"></div>
<div class="b" style="left:595px;top:557px;width:379px;height:64px;background:#f4f4f4;border-radius:8px"></div>
<div class="t" style="left:669.00px;top:575.24px;font-size:27.35px;line-height:27.35px;color:#0a0a0a;font-weight:400;letter-spacing:-0.121px;">Champaklal Gada</div>
<div class="t" style="left:669.00px;top:639.44px;font-size:27.35px;line-height:27.35px;color:#0a0a0a;font-weight:400;letter-spacing:-0.792px;">Daya Gada</div>
<div class="t" style="left:669.00px;top:703.54px;font-size:27.35px;line-height:27.35px;color:#0a0a0a;font-weight:400;letter-spacing:0.335px;">Kim Jong</div>
<div class="t" style="left:669.00px;top:768.04px;font-size:27.35px;line-height:27.35px;color:#0a0a0a;font-weight:400;letter-spacing:-0.923px;">Ros Rai</div>
<div class="t" style="left:669.00px;top:831.54px;font-size:27.35px;line-height:27.35px;color:#0a0a0a;font-weight:400;letter-spacing:-1.255px;">KP Ray</div>
<div class="t" style="left:669.00px;top:895.34px;font-size:27.35px;line-height:27.35px;color:#0a0a0a;font-weight:400;letter-spacing:-1.255px;">KP Ray</div>
<div class="t" style="left:669.00px;top:959.14px;font-size:27.35px;line-height:27.35px;color:#0a0a0a;font-weight:400;letter-spacing:-0.023px;">Daniel Lowery</div>
<div class="b" style="left:584px;top:381px;width:403px;height:640px;border:10px solid #d65b6e;border-radius:6px;box-sizing:border-box"></div>
<div class="b" style="left:2850px;top:3px;width:29px;height:110px;background:#f9f9fa"></div>
<div class="b" style="left:2850px;top:113px;width:29px;height:186px;background:#fefefe"></div>
<svg class="b" style="left:2855px;top:10px" width="20" height="18" viewBox="0 0 20 18"><path d="M10 3 L17 14 H3 Z" fill="#8a8a8a" stroke="#8a8a8a" stroke-width="2" stroke-linejoin="round"/></svg>
<div class="b" style="left:2856px;top:38px;width:18px;height:1150px;background:#8a8a8a;border-radius:9px"></div>
<svg class="b" style="left:2855px;top:1508px" width="20" height="18" viewBox="0 0 20 18"><path d="M3 4 H17 L10 15 Z" fill="#8a8a8a" stroke="#8a8a8a" stroke-width="2" stroke-linejoin="round"/></svg>
<div class="b" style="left:0px;top:1532px;width:2879px;height:8px;background:linear-gradient(90deg,#d4ecc0 0%,#d9ecbf 25%,#e4efb2 45%,#eeefc0 52%,#f7e7d9 62%,#ebeeea 70%,#c8f3ee 76%,#c4f2ef 100%)"></div>
<div class="b" style="left:0px;top:1532px;width:2879px;height:2px;background:rgba(60,70,60,0.35)"></div>
</body></html>
